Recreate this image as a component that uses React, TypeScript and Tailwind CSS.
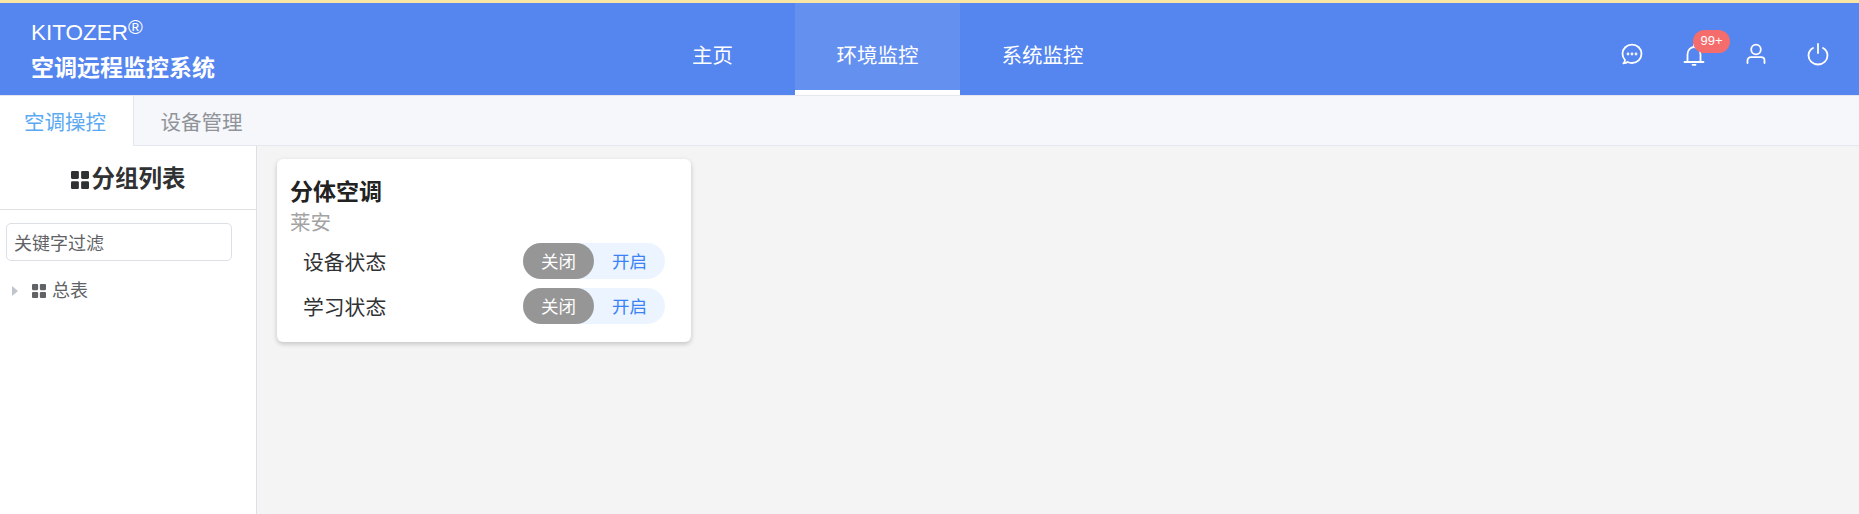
const FONT = "font-['Liberation_Sans','Noto_Sans_CJK_SC',sans-serif]"

function GridIcon({ className }: { className: string }) {
  return (
    <svg viewBox="0 0 16 16" className={className} fill="currentColor">
      <rect x="0" y="0" width="7" height="7" rx="1.2" />
      <rect x="9" y="0" width="7" height="7" rx="1.2" />
      <rect x="0" y="9" width="7" height="7" rx="1.2" />
      <rect x="9" y="9" width="7" height="7" rx="1.2" />
    </svg>
  )
}

function ChatIcon() {
  return (
    <svg viewBox="0 0 24 24" className="w-[24px] h-[24px]" fill="none" stroke="currentColor" strokeWidth="1.8" strokeLinecap="round" strokeLinejoin="round">
      <path d="M3.4 21.4 C5 21.3 6.6 20.9 7.6 20 C9 20.7 10.4 21 12 21 C17.2 21 21.5 17 21.5 11.8 C21.5 6.6 17.2 2.6 12 2.6 C6.8 2.6 2.5 6.6 2.5 11.8 C2.5 14.2 3.4 16.3 5 18 C5 19.2 4.4 20.5 3.4 21.4 Z" />
      <circle cx="8" cy="12" r="0.5" fill="currentColor" />
      <circle cx="12" cy="12" r="0.5" fill="currentColor" />
      <circle cx="16" cy="12" r="0.5" fill="currentColor" />
    </svg>
  )
}

function BellIcon() {
  return (
    <svg viewBox="0 0 24 24" className="w-[24px] h-[24px]" fill="none" stroke="currentColor" strokeWidth="1.8" strokeLinecap="round" strokeLinejoin="round">
      <path d="M2.5 20 H21.5" />
      <path d="M5.5 20 V12.5 C5.5 8.6 8.3 5 12 5 C15.7 5 18.5 8.6 18.5 12.5 V20" />
      <path d="M12 2.5 V4.5" />
      <path d="M10.5 22.8 H13.5" />
    </svg>
  )
}

function UserIcon() {
  return (
    <svg viewBox="0 0 24 24" className="w-[24px] h-[24px]" fill="none" stroke="currentColor" strokeWidth="1.8" strokeLinecap="round" strokeLinejoin="round">
      <circle cx="12" cy="7.5" r="4.8" />
      <path d="M3.5 21 V18.5 C3.5 16.6 5 15.2 7 15.2 H17 C19 15.2 20.5 16.6 20.5 18.5 V21" />
    </svg>
  )
}

function PowerIcon() {
  return (
    <svg viewBox="0 0 24 24" className="w-[24px] h-[24px]" fill="none" stroke="currentColor" strokeWidth="1.8" strokeLinecap="round">
      <path d="M12 2 V11" />
      <path d="M7 6 C4.3 7.6 2.5 10.4 2.5 13.5 C2.5 18.5 6.8 22.5 12 22.5 C17.2 22.5 21.5 18.5 21.5 13.5 C21.5 10.4 19.7 7.6 17 6" />
    </svg>
  )
}

function StatusRow({ label }: { label: string }) {
  return (
    <div className="flex items-center justify-between pl-[13px] pr-[26px] h-[36px]">
      <span className="text-[20.8px] text-[#303133] pt-[3px]">{label}</span>
      <div className="flex h-[36px] w-[142px] rounded-full bg-[#ecf5ff] text-[17.5px]">
        <div className="flex w-[71px] items-center justify-center rounded-full bg-[#969696] text-white pt-[2px]">关闭</div>
        <div className="flex w-[71px] items-center justify-center text-[#3b82f6] pt-[2px]">开启</div>
      </div>
    </div>
  )
}

export default function App() {
  return (
    <div className={`${FONT} h-[514px] w-[1859px] overflow-hidden flex flex-col bg-[#f4f4f4]`}>
      <div className="h-[3px] bg-[#f9e6a4]" />

      <header className="flex h-[93px] bg-[#5585ee] text-white border-b border-[#e4e7ed]">
        <div className="w-[630px] pl-[31px] pt-[14px]">
          <div className="text-[22.5px] leading-[26px]">KITOZER<sup className="text-[20px] leading-none align-[6px] top-0">®</sup></div>
          <div className="mt-[7px] text-[23px] leading-[30px] font-bold">空调远程监控系统</div>
        </div>
        <nav className="flex text-[20.5px]">
          <div className="flex w-[165px] items-center justify-center pt-[15px]">主页</div>
          <div className="flex w-[165px] items-center justify-center bg-[#6490f0] border-b-[5px] border-white pt-[20px]">环境监控</div>
          <div className="flex w-[165px] items-center justify-center pt-[15px]">系统监控</div>
        </nav>
        <div className="ml-auto flex items-center gap-[38px] pr-[29px] pt-[9px]">
          <ChatIcon />
          <div className="relative">
            <BellIcon />
            <span className="absolute -top-[12px] left-[11px] flex h-[23px] w-[37px] items-center justify-center rounded-full bg-[#f56c6c] text-[13px]">99+</span>
          </div>
          <UserIcon />
          <PowerIcon />
        </div>
      </header>

      <div className="flex h-[50px] bg-[#f5f7fa] border-b border-[#e4e7ed] text-[20.5px]">
        <div className="flex w-[134px] items-center justify-center bg-white border-r border-[#e4e7ed] text-[#5aa9f2] h-[50px] pt-[5px] pr-[3px]">空调操控</div>
        <div className="flex w-[135px] items-center justify-center text-[#909399] pt-[5px]">设备管理</div>
      </div>

      <div className="flex flex-1 min-h-0">
        <aside className="w-[257px] bg-white border-r border-[#dcdfe6]">
          <div className="flex h-[64px] items-center justify-center gap-[3px] border-b border-[#e0e0e0] text-[#303133] pt-[4px]">
            <GridIcon className="w-[18px] h-[18px]" />
            <span className="text-[23.5px] font-bold">分组列表</span>
          </div>
          <div className="mt-[13px] ml-[6px] flex h-[38px] w-[226px] items-center rounded-[5px] border border-[#dcdfe6] pl-[7px] pt-[4px] text-[18px] text-[#606266]">关键字过滤</div>
          <div className="mt-[12px] flex h-[36px] items-center text-[18px] text-[#606266]">
            <span className="ml-[12px] w-0 h-0 border-y-[5px] border-y-transparent border-l-[6px] border-l-[#c0c4cc]" />
            <GridIcon className="ml-[14px] w-[14px] h-[14px]" />
            <span className="ml-[6px]">总表</span>
          </div>
        </aside>

        <main className="flex-1 pl-[20px] pt-[13px]">
          <div className="w-[414px] h-[183px] rounded-[6px] bg-white shadow-[0_2px_5px_rgba(0,0,0,0.2)] pt-[17px] pl-[13px]">
            <div className="text-[23px] font-bold leading-[32px] text-[#222]">分体空调</div>
            <div className="text-[20.5px] leading-[28px] text-[#a3a3a3] mb-[6px] pt-[1px]">莱安</div>
            <div className="flex flex-col gap-[9px]">
              <StatusRow label="设备状态" />
              <StatusRow label="学习状态" />
            </div>
          </div>
        </main>
      </div>
    </div>
  )
}
